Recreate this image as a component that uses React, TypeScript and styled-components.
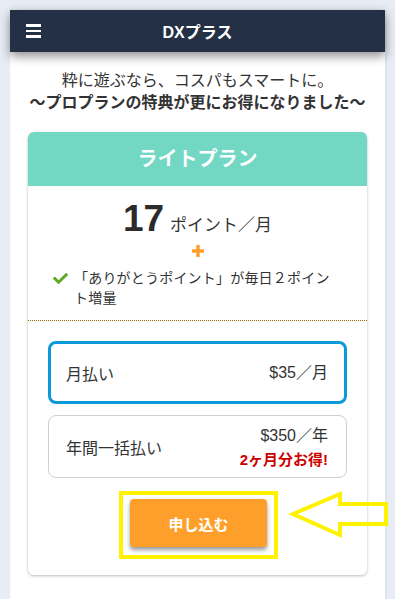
import React from 'react';
import styled, { createGlobalStyle } from 'styled-components';
import { FaCheck } from 'react-icons/fa';

const GlobalStyle = createGlobalStyle`
  html, body {
    margin: 0;
    padding: 0;
    background: #e8edf5;
  }
  body {
    font-family: "Liberation Sans", "Noto Sans CJK JP", sans-serif;
    color: #333;
  }
`;

const plans = [
  { id: 'monthly', label: '月払い', price: '$35／月', selected: true },
  { id: 'yearly', label: '年間一括払い', price: '$350／年', note: '2ヶ月分お得!' },
];

function App() {
  return (
    <>
      <GlobalStyle />
      <Page>
        <Column>
          <Header>
            <MenuButton aria-label="menu">
              <span />
              <span />
              <span />
            </MenuButton>
            <HeaderTitle>DXプラス</HeaderTitle>
          </Header>

          <Lead>
            <LeadLine>粋に遊ぶなら、コスパもスマートに。</LeadLine>
            <LeadLine bold>〜プロプランの特典が更にお得になりました〜</LeadLine>
          </Lead>

          <PlanCard>
            <PlanHeader>ライトプラン</PlanHeader>
            <PlanBody>
              <Points>
                <PointsNumber>17</PointsNumber>
                <PointsUnit>ポイント／月</PointsUnit>
              </Points>
              <Plus>
                <svg width="12" height="12" viewBox="0 0 12 12">
                  <rect x="4.3" y="0" width="3.4" height="12" fill="#ff9d2b" />
                  <rect x="0" y="4.3" width="12" height="3.4" fill="#ff9d2b" />
                </svg>
              </Plus>
              <Benefit>
                <CheckMark>
                  <FaCheck />
                </CheckMark>
                <BenefitText>「ありがとうポイント」が毎日２ポイント増量</BenefitText>
              </Benefit>
            </PlanBody>

            <Options>
              {plans.map((plan) => (
                <Option key={plan.id} selected={plan.selected}>
                  <OptionLabel>{plan.label}</OptionLabel>
                  <OptionPrice>
                    <span>{plan.price}</span>
                    {plan.note && <Deal>{plan.note}</Deal>}
                  </OptionPrice>
                </Option>
              ))}
            </Options>

            <ApplyRow>
              <Highlight>
                <ApplyButton>申し込む</ApplyButton>
              </Highlight>
              <Arrow width="100" height="48" viewBox="0 0 100 48">
                <polygon
                  points="3,23 50,3 50,13 96,13 96,33 50,33 50,44"
                  fill="none"
                  stroke="#fff200"
                  strokeWidth="4"
                  strokeLinejoin="miter"
                />
              </Arrow>
            </ApplyRow>
          </PlanCard>
        </Column>
      </Page>
    </>
  );
}

export default App;

const Page = styled.div`
  padding: 10px 10px 0;
  min-height: 599px;
  box-sizing: border-box;
`;

const Column = styled.div`
  background: #fff;
  min-height: 589px;
  padding-bottom: 24px;
  box-shadow: 1px 0 2px rgba(0, 0, 0, 0.08);
`;

const Header = styled.header`
  position: relative;
  z-index: 1;
  height: 42px;
  background: #233045;
  display: flex;
  align-items: center;
  justify-content: center;
  box-shadow: 0 4px 10px rgba(0, 0, 0, 0.45);
`;

const MenuButton = styled.div`
  position: absolute;
  left: 16px;
  top: 14px;
  width: 15px;
  display: flex;
  flex-direction: column;
  gap: 3px;

  span {
    display: block;
    height: 2.5px;
    background: #fff;
  }
`;

const HeaderTitle = styled.h1`
  margin: 0;
  color: #fff;
  font-size: 16px;
  font-weight: 700;
`;

const Lead = styled.div`
  padding: 18px 0 18px;
  text-align: center;
`;

const LeadLine = styled.p<{ bold?: boolean }>`
  margin: 0;
  font-size: 16px;
  line-height: 22px;
  font-weight: ${(p) => (p.bold ? 700 : 400)};
  color: #333;
`;

const PlanCard = styled.section`
  margin: 0 18px;
  background: #fff;
  border-radius: 6px;
  box-shadow: 0 1px 3px rgba(0, 0, 0, 0.28);
`;

const PlanHeader = styled.h2`
  margin: 0;
  height: 54px;
  line-height: 54px;
  border-radius: 6px 6px 0 0;
  background: #72d7c3;
  color: #fff;
  text-align: center;
  font-size: 20px;
  font-weight: 700;
`;

const PlanBody = styled.div`
  padding: 13px 24px 12px;
  border-bottom: 1px dotted #96620c;
`;

const Points = styled.div`
  display: flex;
  justify-content: center;
  align-items: baseline;
  gap: 6px;
  height: 40px;
  line-height: 40px;
`;

const PointsNumber = styled.span`
  font-size: 37px;
  font-weight: 700;
  color: #2b2b2b;
`;

const PointsUnit = styled.span`
  font-size: 17px;
  color: #333;
`;

const Plus = styled.div`
  height: 20px;
  margin-top: 2px;
  display: flex;
  align-items: center;
  justify-content: center;
`;

const Benefit = styled.div`
  display: flex;
  align-items: flex-start;
  gap: 6px;
  margin-top: 7px;
  padding-left: 1px;
`;

const CheckMark = styled.span`
  flex: none;
  width: 15px;
  height: 20px;
  display: flex;
  align-items: center;
  color: #5aa823;
  font-size: 15px;
`;

const BenefitText = styled.p`
  margin: 0;
  max-width: 272px;
  font-size: 14px;
  letter-spacing: 0.2px;
  line-height: 20px;
  color: #333;
`;

const Options = styled.div`
  padding: 20px 20px 0;
  display: flex;
  flex-direction: column;
  gap: 11px;
`;

const Option = styled.div<{ selected?: boolean }>`
  box-sizing: border-box;
  height: 63px;
  display: flex;
  align-items: center;
  justify-content: space-between;
  border-radius: 8px;
  border: ${(p) => (p.selected ? '3px solid #0a9ad9' : '1px solid #cfcfcf')};
  padding: 0 ${(p) => (p.selected ? '16px' : '18px')} 0
    ${(p) => (p.selected ? '15px' : '17px')};
`;

const OptionLabel = styled.span`
  font-size: 16px;
  color: #333;
`;

const OptionPrice = styled.span`
  display: flex;
  flex-direction: column;
  align-items: flex-end;
  font-size: 16px;
  line-height: 27px;
  color: #333;
`;

const Deal = styled.span`
  font-size: 15px;
  line-height: 22px;
  font-weight: 700;
  color: #cc0000;
`;

const ApplyRow = styled.div`
  position: relative;
  display: flex;
  justify-content: center;
  padding: 13px 0 16px;
`;

const Highlight = styled.div`
  box-sizing: border-box;
  width: 159px;
  height: 68px;
  border: 4px solid #fff200;
  padding: 4px 7px 0;
  margin-left: 2px;
`;

const ApplyButton = styled.button`
  width: 137px;
  height: 48px;
  border: none;
  border-radius: 4px;
  background: #ff9f2b;
  color: #fff;
  font-family: inherit;
  font-size: 15px;
  font-weight: 700;
  box-shadow: 0 3px 4px rgba(0, 0, 0, 0.4);
  cursor: pointer;
`;

const Arrow = styled.svg`
  position: absolute;
  left: 262px;
  top: 13px;
  overflow: visible;
`;
